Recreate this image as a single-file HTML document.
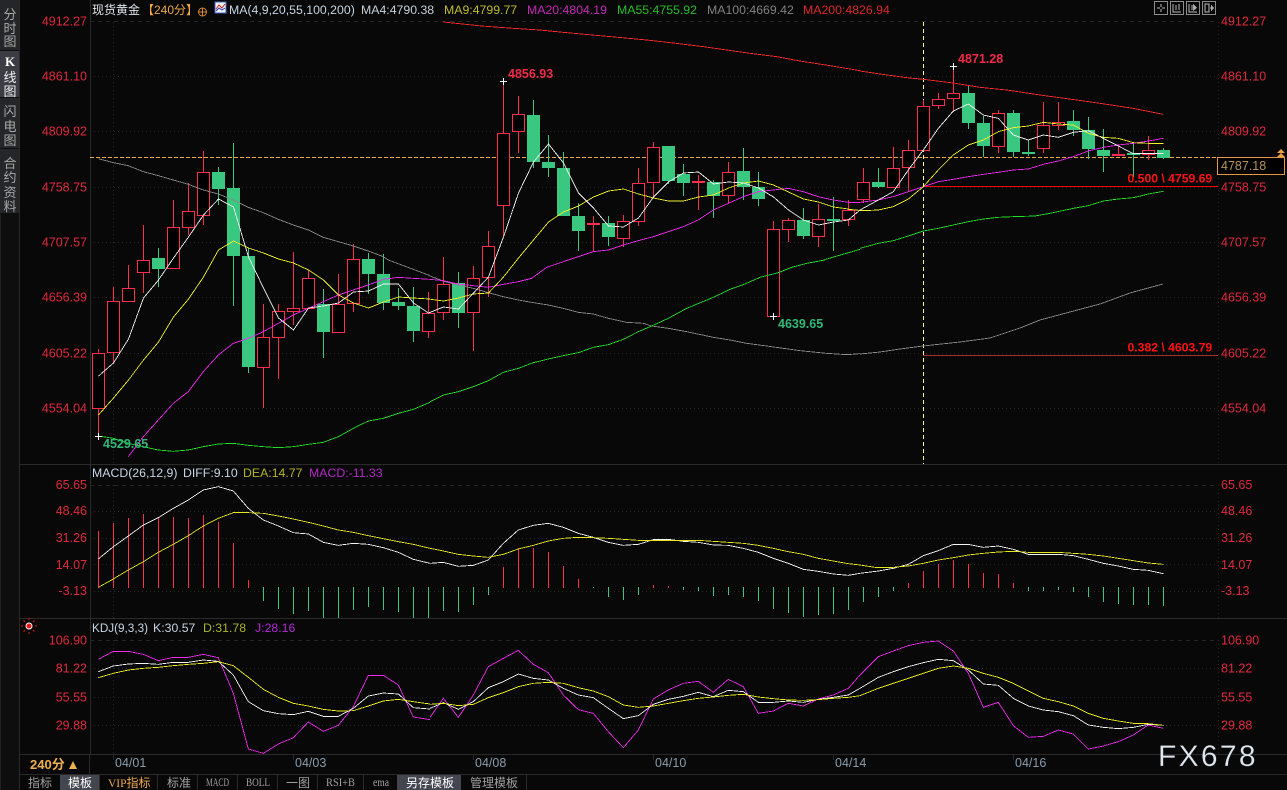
<!DOCTYPE html>
<html><head><meta charset="utf-8"><style>
html,body{margin:0;padding:0;background:#080808;width:1287px;height:790px;overflow:hidden}
svg{display:block}
text{font-family:"Liberation Sans","Noto Sans CJK SC",sans-serif}
.ax text{font-size:12.5px;fill:#e0283c}
.lg text{font-size:12.3px}
.l{fill:none;stroke-width:2.6;shape-rendering:crispEdges}
.g{fill:none;stroke:#262626;shape-rendering:crispEdges}
.tab{font-size:12px;fill:#a0a0a0}
.sd{font-size:13px;fill:#a8a8a8;text-anchor:middle}
.dt{font-size:12.5px;fill:#8a9cac}
.ic{fill:none;stroke:#8c8c8c;shape-rendering:crispEdges}
.sim{font-size:11.5px;font-family:"Liberation Serif",serif}
</style></head><body>
<svg width="1287" height="790" viewBox="0 0 1287 790" xmlns="http://www.w3.org/2000/svg">
<rect width="1287" height="790" fill="#080808"/>
<!-- sidebar -->
<rect x="0" y="0" width="20" height="790" fill="#0e0e0e"/>
<rect x="0" y="0" width="19" height="50" fill="#25262a"/>
<rect x="0" y="51" width="19" height="46" fill="#3b3c44"/>
<rect x="0" y="98" width="19" height="50" fill="#25262a"/>
<rect x="0" y="149" width="19" height="64" fill="#25262a"/>
<rect x="0" y="214" width="1" height="576" fill="#202020"/>
<rect x="19" y="0" width="1" height="790" fill="#2a2a2a"/>
<g class="sd">
<text x="10" y="19">分</text><text x="10" y="33">时</text><text x="10" y="46">图</text>
<text x="10" y="66" style="fill:#fff;font-family:'Liberation Serif',serif;font-weight:bold">K</text><text x="10" y="82" style="fill:#eee">线</text><text x="10" y="96" style="fill:#eee">图</text>
<text x="10" y="116">闪</text><text x="10" y="131">电</text><text x="10" y="145">图</text>
<text x="10" y="168">合</text><text x="10" y="182">约</text><text x="10" y="197">资</text><text x="10" y="211">料</text>
</g>
<!-- grid -->
<g class="g">
<path stroke-dasharray="4 4" d="M90 21.5H1218M90 485.5H1218M90 640.5H1218"/>
<path stroke-dasharray="1 3" d="M90 76.5H1218M90 131.5H1218M90 187.5H1218M90 242.5H1218M90 297.5H1218M90 353.5H1218M90 408.5H1218M90 511.5H1218M90 538.5H1218M90 564.5H1218M90 591.5H1218M90 668.5H1218M90 697.5H1218M90 725.5H1218"/>
<path stroke-dasharray="1 3" d="M113.5 22V464M113.5 485V618M113.5 640V754M1218.5 22V464M1218.5 485V618M1218.5 640V754"/>
</g>
<g stroke="#2a2a2a" fill="none" shape-rendering="crispEdges">
<path d="M90.5 0V754M20 464.5H1287M20 618.5H1287M20 754.5H1287M20 774.5H1287M89.5 754V774"/>
<path d="M113.5 754V760M293.5 754V760M473.5 754V760M653.5 754V760M833.5 754V760M1013.5 754V760"/>
</g>
<!-- reference lines -->
<path d="M90 157.5H1218" stroke="#e8a848" stroke-dasharray="4 2" fill="none" shape-rendering="crispEdges"/>
<path d="M923.5 22V464" stroke="#fbfb90" stroke-dasharray="4 3" fill="none" shape-rendering="crispEdges"/>
<path d="M923 186.5H1218" stroke="#f00" fill="none" shape-rendering="crispEdges"/>
<path d="M923 355.500H1218" stroke="#a83030" fill="none" shape-rendering="crispEdges"/>
<!-- red wicks -->
<path fill="none" stroke="#ff2f4c" shape-rendering="crispEdges" d="M98.5 349V436M113.5 287V363M128.5 265V301M143.5 225V293M173.5 200V268M188.5 183V235M203.5 151V225M263.5 304V408M278.5 304V379M293.5 252V325M308.5 270V308M338.5 274V333M353.5 244V312M428.5 292V338M443.5 257V320M473.5 266V351M488.5 231V297M503.5 80V236M518.5 96V153M593.5 216V252M623.5 215V247M638.5 168V226M653.5 142V197M698.5 175V210M728.5 162V203M773.5 221V317M788.5 218V242M818.5 204V247M848.5 200V226M863.5 168V203M893.5 147V187M908.5 140V192M923.5 100V150M938.5 93V109M953.5 66V112M998.5 110V153M1043.5 102V153M1058.5 102V130M1118.5 146V156M1148.5 136V160"/>
<!-- red bodies -->
<g fill="#000" stroke="#ff2f4c" shape-rendering="crispEdges">
<rect x="92.5" y="353.5" width="12" height="55"/><rect x="107.5" y="301.5" width="12" height="51"/><rect x="122.5" y="288.5" width="12" height="13"/><rect x="137.5" y="260.5" width="12" height="12"/><rect x="167.5" y="227.5" width="12" height="41"/><rect x="182.5" y="211.5" width="12" height="16"/><rect x="197.5" y="172.5" width="12" height="43"/><rect x="257.5" y="337.5" width="12" height="30"/><rect x="272.5" y="311.5" width="12" height="26"/><rect x="287.5" y="308.5" width="12" height="3"/><rect x="302.5" y="278.5" width="12" height="30"/><rect x="332.5" y="304.5" width="12" height="28"/><rect x="347.5" y="259.5" width="12" height="44"/><rect x="422.5" y="313.5" width="12" height="18"/><rect x="437.5" y="284.5" width="12" height="28"/><rect x="467.5" y="278.5" width="12" height="34"/><rect x="482.5" y="246.5" width="12" height="31"/><rect x="497.5" y="133.5" width="12" height="72"/><rect x="512.5" y="114.5" width="12" height="17"/><rect x="587.5" y="223.5" width="12" height="1" fill="#ff2f4c"/><rect x="617.5" y="221.5" width="12" height="17"/><rect x="632.5" y="183.5" width="12" height="38"/><rect x="647.5" y="147.5" width="12" height="35"/><rect x="692.5" y="181.5" width="12" height="1" fill="#ff2f4c"/><rect x="722.5" y="172.5" width="12" height="23"/><rect x="767.5" y="229.5" width="12" height="87"/><rect x="782.5" y="220.5" width="12" height="9"/><rect x="812.5" y="219.5" width="12" height="17"/><rect x="842.5" y="210.5" width="12" height="9"/><rect x="857.5" y="182.5" width="12" height="17"/><rect x="887.5" y="168.5" width="12" height="19"/><rect x="902.5" y="150.5" width="12" height="17"/><rect x="917.5" y="106.5" width="12" height="44"/><rect x="932.5" y="99.5" width="12" height="6"/><rect x="947.5" y="93.5" width="12" height="5"/><rect x="992.5" y="113.5" width="12" height="33"/><rect x="1037.5" y="125.5" width="12" height="23"/><rect x="1052.5" y="122.5" width="12" height="3"/><rect x="1112.5" y="154.5" width="12" height="1" fill="#ff2f4c"/><rect x="1142.5" y="150.5" width="12" height="4"/>
</g>
<!-- green wicks -->
<path fill="none" stroke="#3ac77f" shape-rendering="crispEdges" d="M158.5 248V287M218.5 167V205M233.5 143V306M248.5 248V373M323.5 289V358M368.5 253V294M383.5 254V310M398.5 288V310M413.5 287V342M458.5 272V328M533.5 100V168M548.5 135V177M563.5 152V216M578.5 203V251M608.5 216V246M668.5 146V184M683.5 164V196M713.5 180V218M743.5 148V200M758.5 172V206M803.5 208V239M833.5 197V251M878.5 168V188M968.5 86V129M983.5 116V157M1013.5 110V157M1028.5 140V156M1073.5 110V136M1088.5 117V159M1103.5 129V172M1133.5 143V177M1163.5 148V159"/>
<!-- green bodies -->
<path fill="#3ac77f" shape-rendering="crispEdges" d="M152 258h13v11h-13zM212 172h13v17h-13zM227 188h13v68h-13zM242 256h13v111h-13zM317 304h13v28h-13zM362 259h13v15h-13zM377 274h13v29h-13zM392 302h13v4h-13zM407 306h13v25h-13zM452 283h13v30h-13zM527 115h13v47h-13zM542 162h13v6h-13zM557 168h13v48h-13zM572 216h13v15h-13zM602 223h13v14h-13zM662 146h13v35h-13zM677 174h13v9h-13zM707 182h13v14h-13zM737 171h13v16h-13zM752 187h13v12h-13zM797 220h13v16h-13zM827 219h13v2h-13zM872 182h13v5h-13zM962 93h13v30h-13zM977 123h13v23h-13zM1007 113h13v39h-13zM1022 152h13v2h-13zM1067 121h13v9h-13zM1082 130h13v19h-13zM1097 150h13v6h-13zM1127 153h13v2h-13zM1157 150h13v8h-13z"/>
<!-- MA200 red -->
<g transform="translate(430 0) scale(.33333)"><polyline class="l" stroke="#ff2a2a" points="40,66 155,78 250,85 330,90 400,97 510,107 575,113 650,120 730,129 820,140 890,150 960,160 1040,170 1110,183 1200,197 1290,212"/></g>
<g transform="translate(860 0) scale(.33333)"><polyline class="l" stroke="#ff2a2a" points="0,213 60,222 140,233 190,238 280,249 360,262 440,270 540,285 650,300 720,310 820,325 910,343"/></g>
<!-- MA100 gray -->
<g transform="scale(.33333)"><polyline class="l" stroke="#8a8a8a" points="295,476 340,488 385,497 430,515 475,527 520,540 565,553 610,570 655,582 700,600 745,622 790,638 835,658 880,675 925,690 970,712 1015,725 1060,738 1105,753 1150,770 1165,780 1285,825 1290,828"/></g>
<g transform="translate(430 260) scale(.33333)"><polyline class="l" stroke="#8a8a8a" points="0,48 45,65 85,75 130,85 175,98 220,110 265,120 310,128 355,135 400,145 445,157 490,162 535,175 590,187 640,190 665,198 715,205 770,215 850,232 900,240 950,250 1010,258 1060,265 1110,272 1190,280 1250,284 1290,281"/></g>
<polyline fill="none" stroke="#8a8a8a" stroke-width=".87" shape-rendering="crispEdges" points="860,354 880,352 900,349 923,346 960,342 990,338 1020,328 1040,320 1070,312 1100,304 1130,293 1163,284"/>
<!-- MA55 green -->
<g transform="translate(0 260) scale(.33333)"><polyline class="l" stroke="#22e022" points="295,528 340,535 385,550 430,560 475,570 520,574 565,570 610,560 655,552 700,550 745,556 790,560 835,563 880,560 925,553 970,547 1015,530 1060,505 1105,483 1150,475 1195,460 1240,448 1290,427"/></g>
<g transform="translate(430 260) scale(.33333)"><polyline class="l" stroke="#22e022" points="0,425 40,405 85,395 130,380 175,362 220,337 265,325 310,308 355,297 400,287 445,278 490,262 535,254 580,238 625,215 665,198 715,175 770,145 850,112 900,88 945,72 990,52 1045,38 1085,22 1130,10 1185,0"/></g>
<g transform="translate(430 0) scale(.33333)"><polyline class="l" stroke="#22e022" points="1180,780 1290,748"/></g>
<g transform="translate(860 0) scale(.33333)"><polyline class="l" stroke="#22e022" points="0,745 55,730 100,722 145,708 190,693 235,685 280,675 325,665 370,657 415,652 460,650 525,648 570,640 640,625 685,617 730,603 775,597 820,593 865,582 910,574"/></g>
<!-- MA20 magenta -->
<g transform="translate(0 260) scale(.33333)"><polyline class="l" stroke="#f028f0" points="385,590 430,530 475,480 520,430 565,395 610,335 655,285 700,250 745,235 790,215 835,190 880,165 925,145 970,125 1015,105 1060,90 1105,75 1150,58 1195,52 1240,55 1290,58"/></g>
<g transform="translate(430 260) scale(.33333)"><polyline class="l" stroke="#f028f0" points="0,58 40,62 85,72 130,77 175,82 220,73 265,65 305,55 350,22 415,0"/></g>
<g transform="translate(430 0) scale(.33333)"><polyline class="l" stroke="#f028f0" points="415,780 490,755 535,750 580,735 625,722 670,710 715,695 760,680 805,660 850,630 895,610 940,590 985,575 1030,570 1075,565 1120,575 1165,590 1210,600 1255,607 1290,607"/></g>
<g transform="translate(860 0) scale(.33333)"><polyline class="l" stroke="#f028f0" points="0,607 55,600 100,590 145,575 190,560 235,545 280,538 325,530 370,523 415,517 460,510 505,507 550,493 595,483 640,470 685,453 730,442 775,435 820,430 865,423 910,415"/></g>
<!-- MA9 yellow -->
<polyline fill="none" stroke="#f4f428" stroke-width=".87" shape-rendering="crispEdges" points="98.5,415 113.5,398 128.5,380 143.5,360 158.5,342 173.5,317 188.5,299 203.5,277 218.5,250 233.5,241 248.5,248 263.5,253 278.5,259 293.5,263 308.5,270 323.5,280 338.5,295 353.5,303 368.5,308 383.5,302 398.5,297 413.5,298 428.5,299 443.5,301 458.5,298 473.5,294 488.5,293 503.5,277 518.5,258 533.5,240 548.5,222 563.5,212 578.5,206 593.5,197 608.5,191 623.5,189 638.5,194 653.5,198 668.5,201 683.5,201 698.5,197 713.5,195 728.5,188 743.5,183 758.5,181 773.5,185 788.5,192 803.5,199 818.5,202 833.5,207 848.5,209"/>
<g transform="translate(860 0) scale(.33333)"><polyline class="l" stroke="#f4f428" points="-35,628 10,632 55,630 100,620 145,597 190,560 235,510 280,465 325,435 370,420 415,395 460,383 505,378 550,367 595,372 640,375 685,400 730,412 775,415 820,428 865,430 910,430"/></g>
<!-- MA4 white -->
<polyline fill="none" stroke="#f4f4f4" stroke-width=".87" shape-rendering="crispEdges" points="98.5,376 113.5,363 128.5,339 143.5,298 158.5,280 173.5,258 188.5,237 203.5,215 218.5,199 233.5,207 248.5,257 263.5,288 278.5,318 293.5,330 308.5,308 323.5,306 338.5,303 353.5,292 368.5,291 383.5,284 398.5,284 413.5,303 428.5,313 443.5,307 458.5,309 473.5,293 488.5,277 503.5,237 518.5,193 533.5,162 548.5,144 563.5,163 578.5,193 593.5,208 608.5,226 623.5,227 638.5,218 653.5,197 668.5,182 683.5,173 698.5,172 713.5,184 728.5,182 743.5,183 758.5,188 773.5,197 788.5,210 803.5,220 818.5,225 833.5,222 848.5,220"/>
<g transform="translate(860 0) scale(.33333)"><polyline class="l" stroke="#f4f4f4" points="-35,660 0,630 55,600 100,575 145,510 190,450 235,385 280,333 325,312 370,345 415,355 460,405 505,420 550,405 595,412 640,397 685,392 730,415 775,438 820,461 865,460 910,460"/></g>
<!-- extreme markers -->
<path fill="none" stroke="#fff" shape-rendering="crispEdges" d="M500 81.5h7M503.5 78v7M950 66.5h7M953.5 63v7M770 316.5h7M773.5 313v7M95 436.5h7M98.5 433v7"/>
<!-- annotations -->
<g font-size="12.5" font-weight="bold">
<text x="508" y="78" fill="#f02a48">4856.93</text>
<text x="958" y="63" fill="#f02a48">4871.28</text>
<text x="778" y="328" fill="#2fb878">4639.65</text>
<text x="103" y="448" fill="#2fb878">4529.65</text>
<text x="1127.5" y="182.5" fill="#ff1010" font-size="12.2">0.500 \ 4759.69</text>
<text x="1127.5" y="351.5" fill="#ff1010" font-size="12.2">0.382 \ 4603.79</text>
</g>
<!-- axes -->
<g class="ax" text-anchor="end">
<text x="87" y="25.5">4912.27</text><text x="87" y="80.5">4861.10</text><text x="87" y="135.5">4809.92</text><text x="87" y="191.5">4758.75</text><text x="87" y="246.5">4707.57</text><text x="87" y="301.5">4656.39</text><text x="87" y="357.5">4605.22</text><text x="87" y="412.5">4554.04</text>
<text x="87" y="489">65.65</text><text x="87" y="515">48.46</text><text x="87" y="542">31.26</text><text x="87" y="569">14.07</text><text x="87" y="595">-3.13</text>
<text x="87" y="644.5">106.90</text><text x="87" y="672.5">81.22</text><text x="87" y="701.5">55.55</text><text x="87" y="729.5">29.88</text>
</g>
<g class="ax">
<text x="1221" y="25.5">4912.27</text><text x="1221" y="80.5">4861.10</text><text x="1221" y="135.5">4809.92</text><text x="1221" y="191.5">4758.75</text><text x="1221" y="246.5">4707.57</text><text x="1221" y="301.5">4656.39</text><text x="1221" y="357.5">4605.22</text><text x="1221" y="412.5">4554.04</text>
<text x="1221" y="489">65.65</text><text x="1221" y="515">48.46</text><text x="1221" y="542">31.26</text><text x="1221" y="569">14.07</text><text x="1221" y="595">-3.13</text>
<text x="1221" y="644.5">106.90</text><text x="1221" y="672.5">81.22</text><text x="1221" y="701.5">55.55</text><text x="1221" y="729.5">29.88</text>
</g>
<!-- price tag -->
<rect x="1217.5" y="157.5" width="67" height="17" fill="#000" stroke="#e89840" shape-rendering="crispEdges"/>
<text x="1221" y="170" font-size="12.5" fill="#b8935a">4787.18</text>
<path d="M1281 149l4 4h-8zM1281 153l4 4h-8z" fill="#f0a040"/>
<!-- top-right icons -->
<g class="ic">
<rect x="1154.5" y="1.5" width="13" height="13"/><rect x="1170.5" y="1.5" width="13" height="13"/><rect x="1186.5" y="1.5" width="13" height="13"/><rect x="1202.5" y="1.5" width="13" height="13"/>
<path stroke="#bbb" d="M1161 4v3M1161 9v3M1157 8h3M1162 8h3"/>
<path stroke="#bbb" d="M1173 4v8h8M1176 5v5M1179 4v6"/>
<path stroke="#bbb" d="M1189 4v8h8M1192 5v5"/><path d="M1193 4l4 4-4 3z" fill="#aaa" stroke="none"/>
<path stroke="#bbb" d="M1205 4h4v8h-4zM1210 8h3"/><path d="M1211 5l3 3-3 3z" fill="#aaa" stroke="none"/>
</g>
<!-- legend top -->
<g class="lg">
<text x="92" y="14" fill="#dfe6ee" style="font-size:12px">现货黄金</text>
<text x="142" y="14" fill="#eda648" style="font-size:12px">【240分】</text>
<circle cx="202.5" cy="12" r="4" fill="none" stroke="#d88838"/><path d="M198 12h9M202.5 8v8" stroke="#d88838" fill="none"/>
<rect x="215" y="2" width="11" height="11" fill="#f4f4f4" stroke="#4060c0"/>
<path d="M216 9l3-4 3 3 3-4" stroke="#d02020" fill="none"/><path d="M216 11l3-3 3 2 3-2" stroke="#2040c0" fill="none"/>
<text x="229" y="14" fill="#c4d4e4">MA(4,9,20,55,100,200)</text>
<text x="361" y="14" fill="#c4d0d8">MA4:4790.38</text>
<text x="444" y="14" fill="#bcbc28">MA9:4799.77</text>
<text x="527" y="14" fill="#c428b8">MA20:4804.19</text>
<text x="617" y="14" fill="#28bc28">MA55:4755.92</text>
<text x="707" y="14" fill="#808080">MA100:4669.42</text>
<text x="803" y="14" fill="#dc2828">MA200:4826.94</text>
</g>
<!-- MACD legend -->
<g class="lg">
<text x="92" y="477" fill="#c4d4e4">MACD(26,12,9)</text>
<text x="183" y="477" fill="#c4d4e4">DIFF:9.10</text>
<text x="243" y="477" fill="#b4b428">DEA:14.77</text>
<text x="309" y="477" fill="#b428c8">MACD:-11.33</text>
</g>
<!-- MACD bars -->
<path fill="none" stroke="#ff2f4c" shape-rendering="crispEdges" d="M98.5 531V588M113.5 523V588M128.5 518V588M143.5 514V588M158.5 518V588M173.5 517V588M188.5 518V588M203.5 515V588M218.5 522V588M233.5 543V588M248.5 580V588M503.5 567V588M518.5 548V588M533.5 548V588M548.5 552V588M563.5 566V588M578.5 579V588M653.5 585V588M668.5 586V588M908.5 583V588M923.5 571V588M938.5 564V588M953.5 560V588M968.5 564V588M983.5 573V588M998.5 574V588M1013.5 583V588"/>
<path fill="none" stroke="#3ac77f" shape-rendering="crispEdges" d="M263.5 587V601M278.5 587V609M293.5 587V614M308.5 587V611M323.5 587V618M338.5 587V618M353.5 587V610M368.5 587V607M383.5 587V610M398.5 587V612M413.5 587V618M428.5 587V618M443.5 587V611M458.5 587V612M473.5 587V605M488.5 587V595M593.5 587V588M608.5 587V597M623.5 587V600M638.5 587V595M683.5 587V590M698.5 587V591M713.5 587V596M728.5 587V595M743.5 587V597M758.5 587V601M773.5 587V609M788.5 587V613M803.5 587V617M818.5 587V615M833.5 587V614M848.5 587V610M863.5 587V602M878.5 587V597M893.5 587V591M1028.5 587V591M1043.5 587V591M1058.5 587V590M1073.5 587V592M1088.5 587V597M1103.5 587V602M1118.5 587V604M1133.5 587V605M1148.5 587V605M1163.5 587V606"/>
<!-- MACD lines -->
<g transform="translate(0 465) scale(.33333)">
<polyline class="l" stroke="#f4f4f4" points="295,282 340,245 385,213 430,180 475,158 520,130 565,105 610,75 655,65 700,78 745,130 790,165 835,183 880,203 925,207 970,232 1015,241 1060,235 1105,238 1150,248 1195,262 1240,283 1290,295"/>
<polyline class="l" stroke="#e8e820" points="295,367 340,342 385,315 430,290 475,262 520,238 565,212 610,183 655,160 700,143 745,143 790,145 835,153 880,162 925,172 970,183 1015,195 1060,202 1105,212 1150,221 1195,230 1240,238 1290,250"/>
</g>
<g transform="translate(430 465) scale(.33333)">
<polyline class="l" stroke="#f4f4f4" points="0,295 40,292 85,304 130,301 175,285 220,235 265,195 310,181 355,175 400,187 445,205 490,217 535,232 580,241 625,238 670,224 715,223 760,229 805,232 850,240 895,241 940,250 985,262 1030,280 1075,295 1120,313 1165,319 1210,327 1255,331 1290,325"/>
<polyline class="l" stroke="#e8e820" points="0,250 40,258 85,268 130,273 175,277 220,268 265,252 310,241 355,228 400,220 445,217 490,218 535,220 580,223 625,226 670,226 715,226 760,226 805,226 850,229 895,232 940,235 985,241 1030,250 1075,260 1120,268 1165,280 1210,288 1255,296 1290,300"/>
</g>
<g transform="translate(860 465) scale(.33333)">
<polyline class="l" stroke="#f4f4f4" points="0,325 55,318 100,310 145,298 190,272 235,257 280,238 325,238 370,247 415,243 460,253 505,268 550,268 595,268 640,272 685,283 730,295 775,303 820,313 865,316 910,326"/>
<polyline class="l" stroke="#e8e820" points="0,300 45,307 100,307 145,303 190,295 235,285 280,278 325,270 370,265 415,261 460,259 505,262 550,262 595,262 640,265 685,268 730,273 775,280 820,287 865,294 910,298"/>
</g>
<!-- KDJ legend -->
<circle cx="29" cy="626" r="3" fill="#f01010" stroke="#fff"/>
<path d="M29 620v-2M29 632v2M23 626h-2M35 626h2M25 622l-1.500-1.500M33 622l1.500-1.500M25 630l-1.500 1.500M33 630l1.500 1.500" stroke="#f01010" fill="none"/>
<g class="lg">
<text x="92" y="632" fill="#c4d4e4" textLength="56" lengthAdjust="spacingAndGlyphs">KDJ(9,3,3)</text>
<text x="153" y="632" fill="#c4d4e4">K:30.57</text>
<text x="203" y="632" fill="#a8b428">D:31.78</text>
<text x="255" y="632" fill="#b428d8">J:28.16</text>
</g>
<!-- KDJ lines -->
<g transform="translate(0 620) scale(.33333)">
<polyline class="l" stroke="#f028f0" points="295,118 340,94 385,94 430,103 475,122 520,112 565,112 610,103 655,113 700,220 745,387 790,400 835,372 880,353 925,306 970,334 1015,316 1060,260 1105,166 1150,166 1195,195 1240,291 1290,299"/>
<polyline class="l" stroke="#f4f4f4" points="295,155 340,138 385,132 430,130 475,133 520,127 565,127 610,120 655,124 700,165 745,245 790,272 835,281 880,284 925,274 970,289 1015,289 1060,265 1105,228 1150,219 1195,222 1240,263 1290,267"/>
<polyline class="l" stroke="#f0f020" points="295,173 340,160 385,150 430,145 475,142 520,137 565,133 610,130 655,125 700,137 745,172 790,208 835,232 880,250 925,258 970,268 1015,273 1060,272 1105,258 1150,243 1195,238 1240,245 1290,252"/>
</g>
<g transform="translate(430 620) scale(.33333)">
<polyline class="l" stroke="#f028f0" points="0,292 40,235 85,292 130,225 175,140 220,115 265,91 310,133 355,158 400,225 445,269 490,280 535,335 580,383 625,330 670,237 715,210 760,190 805,184 850,217 895,178 940,200 985,280 1030,273 1075,250 1120,258 1165,237 1210,225 1255,205 1290,165"/>
<polyline class="l" stroke="#f4f4f4" points="0,265 40,248 85,268 130,245 175,203 220,185 265,162 310,175 355,180 400,205 445,225 490,233 535,265 580,296 625,287 670,253 715,238 760,229 805,217 850,230 895,211 940,215 985,247 1030,247 1075,243 1120,247 1165,238 1210,232 1255,225 1290,205"/>
<polyline class="l" stroke="#f0f020" points="0,253 40,250 85,257 130,253 175,233 220,218 265,200 310,190 355,187 400,190 445,203 490,213 535,230 580,255 625,262 670,258 715,250 760,242 805,235 850,231 895,226 940,223 985,231 1030,236 1075,240 1120,241 1165,239 1210,235 1255,232 1290,227"/>
</g>
<g transform="translate(860 620) scale(.33333)">
<polyline class="l" stroke="#f028f0" points="0,165 55,110 100,93 145,77 190,67 235,63 280,93 325,160 370,262 415,247 460,317 505,352 550,349 595,330 640,342 685,387 730,378 775,365 820,345 865,315 910,325"/>
<polyline class="l" stroke="#f4f4f4" points="0,205 55,172 100,155 145,140 190,128 235,118 280,122 325,150 370,192 415,196 460,235 505,258 550,270 595,275 640,287 685,315 730,322 775,326 820,322 865,313 910,316"/>
<polyline class="l" stroke="#f0f020" points="0,227 55,205 100,190 145,175 190,160 235,145 280,138 325,145 370,160 415,172 460,190 505,213 550,235 595,245 640,258 685,280 730,295 775,303 820,310 865,311 910,316"/>
</g>
<!-- dates -->
<g class="dt">
<text x="115" y="767">04/01</text><text x="295" y="767">04/03</text><text x="475" y="767">04/08</text><text x="655" y="767">04/10</text><text x="835" y="767">04/14</text><text x="1015" y="767">04/16</text>
</g>
<text x="30" y="769" font-size="13" font-weight="bold" fill="#eeb050">240分</text>
<path d="M69 769l4-8 4 8z" fill="#eeb050"/>
<!-- watermark -->
<text x="1158" y="766" font-size="30" letter-spacing="2.3" fill="#dfe7f0" stroke="#303030" stroke-width=".3">FX678</text>
<!-- tab bar -->
<rect x="60" y="775" width="39" height="15" fill="#44464f"/>
<rect x="397" y="775" width="64" height="15" fill="#44464f"/>
<path d="M99.500 775V790M157.500 775V790M197.500 775V790M237.500 775V790M277.500 775V790M317.500 775V790M363.500 775V790M526.500 775V790" stroke="#2c2c2c" fill="none" shape-rendering="crispEdges"/>
<g class="tab">
<text x="28" y="787">指标</text>
<text x="68" y="787" style="fill:#fff">模板</text>
<text x="108" y="787" style="fill:#f0aa50"><tspan class="sim">VIP</tspan>指标</text>
<text x="167" y="787">标准</text>
<text x="206" y="786" class="sim" textLength="23" lengthAdjust="spacingAndGlyphs">MACD</text>
<text x="246" y="786" class="sim" textLength="24" lengthAdjust="spacingAndGlyphs">BOLL</text>
<text x="286" y="787">一图</text>
<text x="326" y="786" class="sim" textLength="29" lengthAdjust="spacingAndGlyphs">RSI+B</text>
<text x="373" y="786" class="sim" textLength="16" lengthAdjust="spacingAndGlyphs">ema</text>
<text x="406" y="787" style="fill:#fff">另存模板</text>
<text x="470" y="787">管理模板</text>
</g>
</svg>
</body></html>
